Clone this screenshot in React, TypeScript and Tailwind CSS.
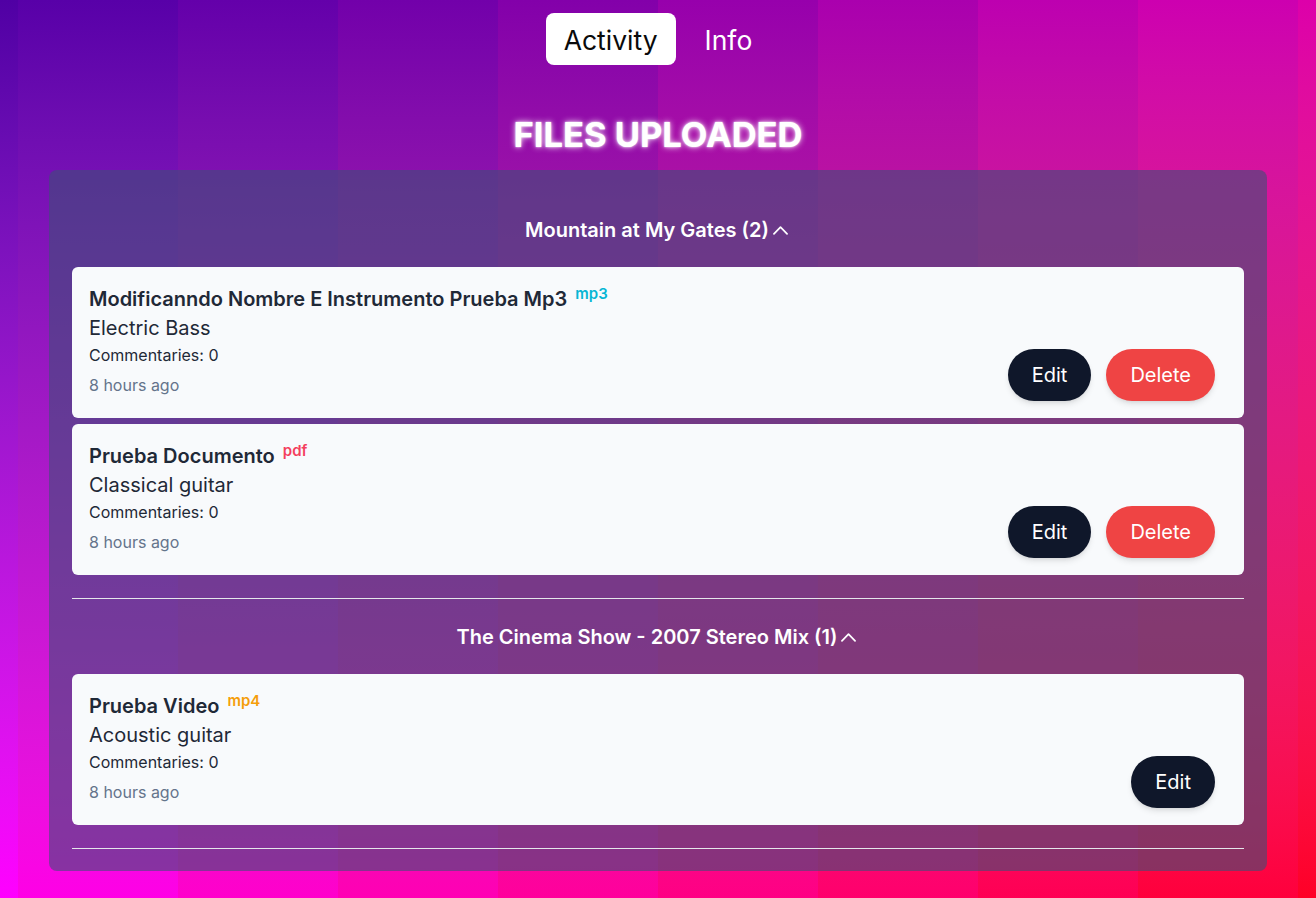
import React from "react";

type FileItem = {
  title: string;
  ext: string;
  extClass: string;
  instrument: string;
  canDelete: boolean;
};

type Group = { name: string; files: FileItem[] };

const groups: Group[] = [
  {
    name: "Mountain at My Gates (2)",
    files: [
      {
        title: "Modificanndo Nombre E Instrumento Prueba Mp3",
        ext: "mp3",
        extClass: "text-[#06b6d4]",
        instrument: "Electric Bass",
        canDelete: true,
      },
      {
        title: "Prueba Documento",
        ext: "pdf",
        extClass: "text-[#f43f5e]",
        instrument: "Classical guitar",
        canDelete: true,
      },
    ],
  },
  {
    name: "The Cinema Show - 2007 Stereo Mix (1)",
    files: [
      {
        title: "Prueba Video",
        ext: "mp4",
        extClass: "text-[#f59e0b]",
        instrument: "Acoustic guitar",
        canDelete: false,
      },
    ],
  },
];

function ChevronUp() {
  return (
    <svg
      width="21"
      height="21"
      viewBox="0 0 24 24"
      fill="none"
      stroke="currentColor"
      strokeWidth={2}
      strokeLinecap="round"
      strokeLinejoin="round"
    >
      <path d="M4.5 15.75l7.5-7.5 7.5 7.5" />
    </svg>
  );
}

function Card({ f }: { f: FileItem }) {
  return (
    <div className="flex items-end justify-between rounded-md bg-[#f8fafc] pl-[17px] pr-[29px] pt-4 pb-[17px]">
      <div className="flex flex-col pb-[6px]">
        <div className="text-xl font-semibold leading-8 text-[#1f2937]">
          {f.title}{" "}
          <sup className={`ml-[3px] text-[15px] font-semibold ${f.extClass}`}>{f.ext}</sup>
        </div>
        <div className="-mt-px text-xl leading-7 text-[#1f2937]">{f.instrument}</div>
        <div className="mt-[3px] text-base leading-5 text-[#1f2937]">Commentaries: 0</div>
        <div className="mt-[10px] text-base leading-5 text-[#64748b]">8 hours ago</div>
      </div>
      <div className="flex items-center gap-[15px]">
        <button className="rounded-full bg-[#0f172a] px-6 py-3 text-xl leading-7 text-white shadow-md">
          Edit
        </button>
        {f.canDelete && (
          <button className="rounded-full bg-[#ef4444] px-6 py-3 text-xl leading-7 text-white shadow-md">
            Delete
          </button>
        )}
      </div>
    </div>
  );
}

export default function App() {
  return (
    <div className="relative h-[898px] w-full overflow-hidden font-['Inter','Noto_Sans',sans-serif]">
      {/* striped gradient background */}
      <div className="absolute inset-0 flex">
        <div className="w-[18px] shrink-0 bg-linear-to-b from-[#5000a4] to-[#ff00ff]" />
        <div className="w-[160px] shrink-0 bg-linear-to-b from-[#5800a8] to-[#ff00e6]" />
        <div className="w-[160px] shrink-0 bg-linear-to-b from-[#6400aa] to-[#ff00cc]" />
        <div className="w-[160px] shrink-0 bg-linear-to-b from-[#7200aa] to-[#ff00b4]" />
        <div className="w-[160px] shrink-0 bg-linear-to-b from-[#8300aa] to-[#ff009c]" />
        <div className="w-[160px] shrink-0 bg-linear-to-b from-[#9700ac] to-[#ff0084]" />
        <div className="w-[160px] shrink-0 bg-linear-to-b from-[#aa00ae] to-[#ff006c]" />
        <div className="w-[160px] shrink-0 bg-linear-to-b from-[#bd00b0] to-[#ff0054]" />
        <div className="w-[160px] shrink-0 bg-linear-to-b from-[#cd00b0] to-[#ff003c]" />
        <div className="flex-1 bg-linear-to-b from-[#dd00aa] to-[#ff0026]" />
      </div>

      <div className="relative flex flex-col items-center pt-[13px]">
        {/* tabs */}
        <div className="flex items-center gap-[11px]">
          <button className="rounded-lg bg-white px-[18px] pt-[11px] pb-[9px] text-[26.5px] leading-8 text-[#0a0a0a]">
            Activity
          </button>
          <button className="px-[18px] pt-[11px] pb-[9px] text-[26.5px] leading-8 text-white">Info</button>
        </div>

        <h1 className="mt-[50px] text-[34.5px] font-bold leading-10 text-white [text-shadow:0_0_6px_rgba(255,255,255,0.9),0_0_2px_rgba(255,255,255,0.9)]">
          FILES UPLOADED
        </h1>

        {/* panel */}
        <div className="mt-[15px] w-[1218px] rounded-lg bg-[#3c5077]/60 px-[23px] py-[22px]">
          {groups.map((g) => (
            <div key={g.name} className="pt-6">
              <div className="flex h-7 items-center justify-center gap-[1px] text-xl font-semibold leading-7 text-white">
                <span>{g.name}</span>
                <ChevronUp />
              </div>
              <div className="mt-[23px] flex flex-col gap-[6px]">
                {g.files.map((f) => (
                  <Card key={f.title} f={f} />
                ))}
              </div>
              <div className="mt-[23px] h-px bg-[#e5e7eb]" />
            </div>
          ))}
        </div>
      </div>
    </div>
  );
}
